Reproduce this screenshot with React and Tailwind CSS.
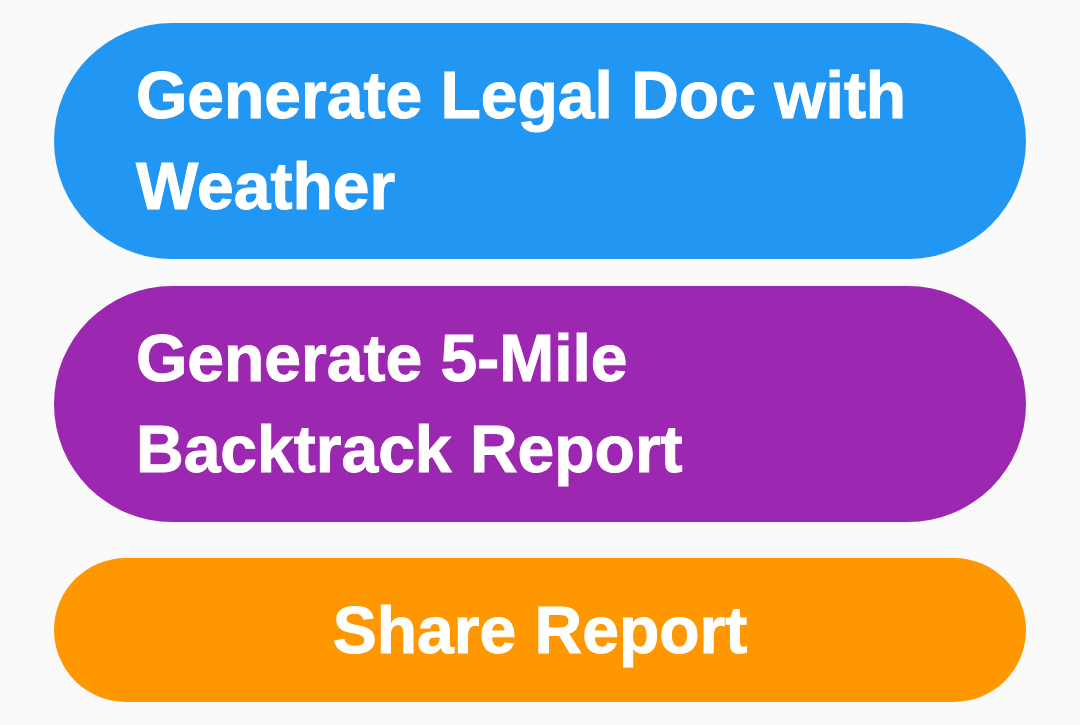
export default function App() {
  const font = { fontFamily: '"Liberation Sans", Arial, sans-serif' };
  return (
    <div className="min-h-[725px] w-full bg-[#fafafa] px-[54px] pt-[23px]" style={font}>
      <button className="block w-full rounded-full bg-[#2196f3] py-[27px] pl-[82px] pr-[40px] text-left text-[66px] font-bold leading-[91px] text-white [-webkit-text-stroke:1px_white]">
        Generate Legal Doc with
        <br />
        Weather
      </button>
      <button className="mt-[27px] block w-full rounded-full bg-[#9c27b0] py-[27px] pl-[82px] pr-[40px] text-left text-[66px] font-bold leading-[91px] text-white [-webkit-text-stroke:1px_white]">
        Generate 5-Mile
        <br />
        Backtrack Report
      </button>
      <button className="mt-[36px] flex h-[144px] w-full items-center justify-center rounded-full bg-[#ff9800] text-[66px] font-bold leading-[91px] text-white [-webkit-text-stroke:1px_white]">
        Share Report
      </button>
    </div>
  );
}
